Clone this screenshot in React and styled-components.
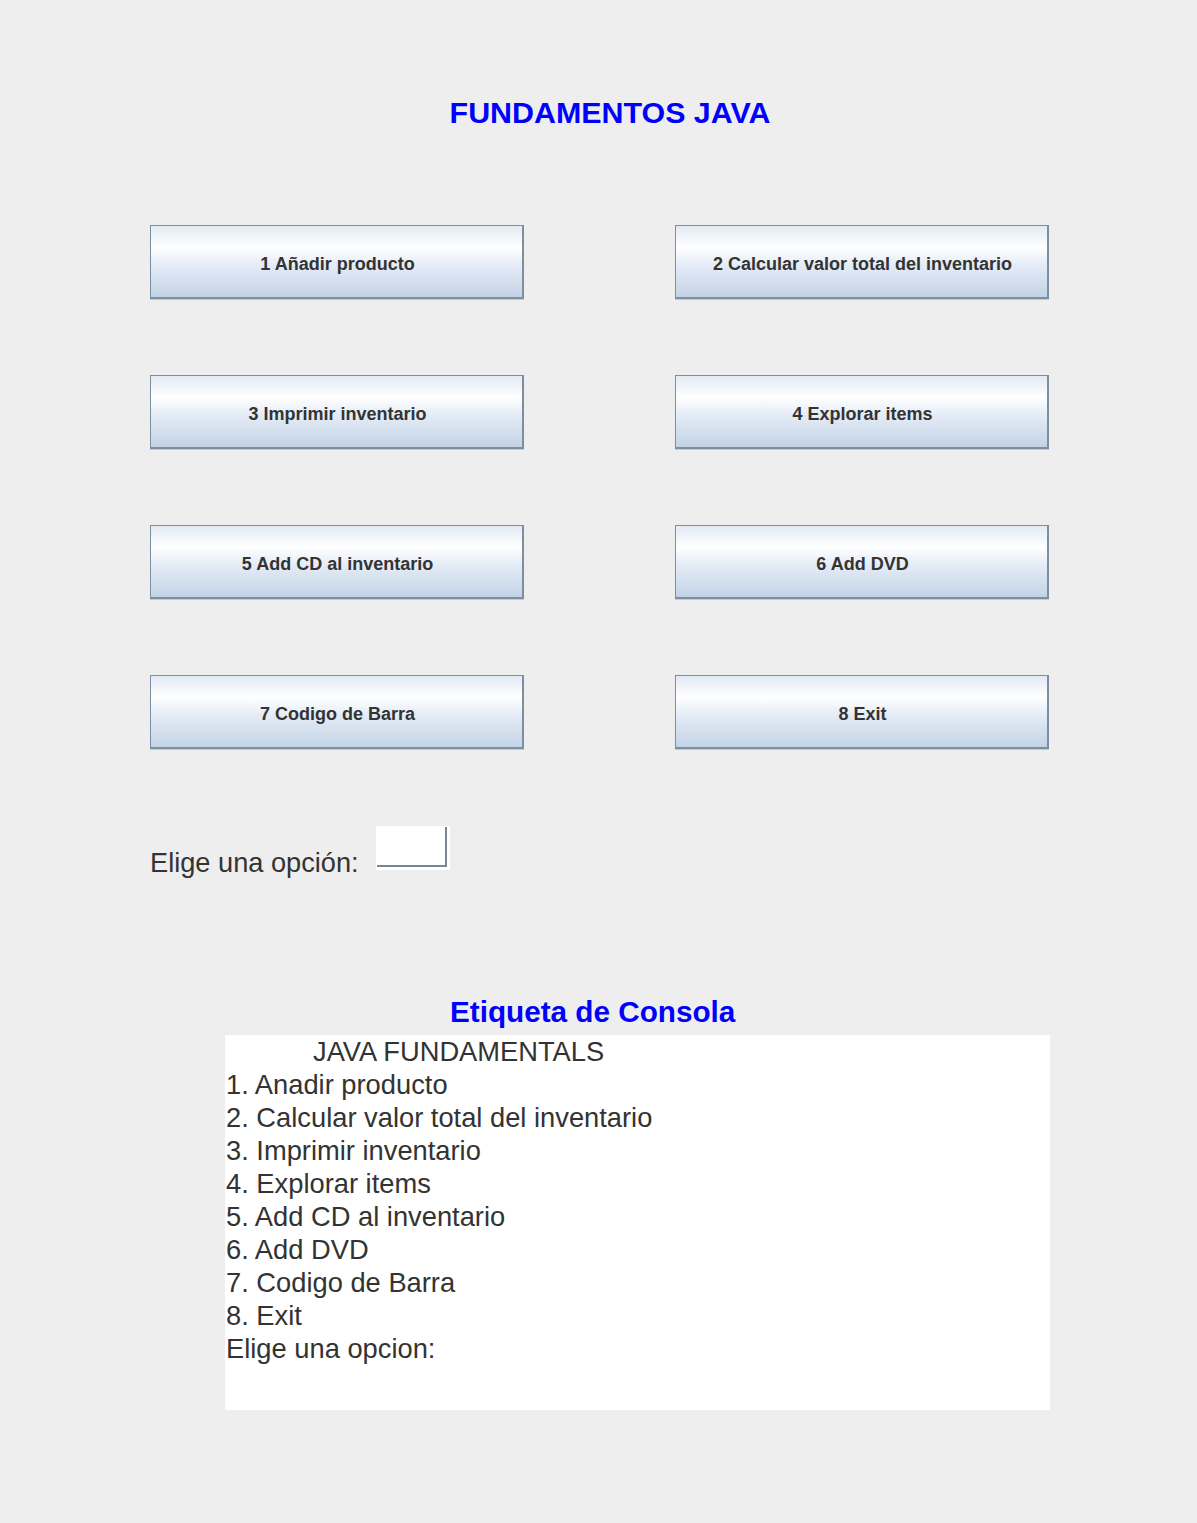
import React from 'react'
import styled, { createGlobalStyle } from 'styled-components'

const GlobalStyle = createGlobalStyle`
  html, body {
    margin: 0;
    padding: 0;
    background: #eeeeee;
  }
  body {
    font-family: "Liberation Sans", Arial, sans-serif;
    color: #333333;
  }
`

const Page = styled.div`
  width: 1197px;
  min-height: 1523px;
  display: flex;
  flex-direction: column;
  align-items: flex-start;
  padding-left: 150px;
  box-sizing: border-box;
`

const Title = styled.h1`
  margin: 94px 0 0 0;
  width: 920px;
  text-align: center;
  font-size: 30.4px;
  font-weight: bold;
  line-height: 36px;
  color: #0000ff;
`

const ButtonGrid = styled.div`
  margin-top: 95px;
  display: grid;
  grid-template-columns: 374px 374px;
  column-gap: 151px;
  row-gap: 76px;
`

const MenuButton = styled.button`
  height: 74px;
  box-sizing: border-box;
  border: 1px solid #7d8ea3;
  border-right-width: 2px;
  border-bottom-width: 2px;
  box-shadow: 0 1px 0 #b9cde3;
  background: linear-gradient(
    to bottom,
    #e2eaf4 0%,
    #ffffff 30%,
    #e4ecf6 55%,
    #c3d3e6 100%
  );
  font-family: "Liberation Sans", Arial, sans-serif;
  font-size: 18px;
  font-weight: bold;
  color: #333333;
  padding: 5px 0 0 2px;
  cursor: pointer;
`

const OptionRow = styled.div`
  margin-top: 77px;
  display: flex;
  align-items: flex-start;
  gap: 17px;
`

const OptionLabel = styled.span`
  margin-top: 21px;
  font-size: 27.2px;
  line-height: 32px;
  color: #333333;
`

const OptionInput = styled.div`
  width: 74px;
  height: 44px;
  box-sizing: border-box;
  background: #ffffff;
  position: relative;

  &::after {
    content: '';
    position: absolute;
    left: 1px;
    top: 1px;
    right: 3px;
    bottom: 3px;
    border-right: 2px solid #7a8694;
    border-bottom: 2px solid #7a8694;
  }
`

const ConsoleTitle = styled.h2`
  margin: 115px 0 0 0;
  width: 885px;
  font-size: 29.7px;
  font-weight: bold;
  line-height: 36px;
  color: #0000ff;
  padding-left: 300px;
  box-sizing: border-box;
`

const Console = styled.pre`
  margin: 5px 0 0 75px;
  width: 825px;
  height: 375px;
  box-sizing: border-box;
  background: #ffffff;
  font-family: "Liberation Sans", Arial, sans-serif;
  font-size: 27.3px;
  line-height: 33px;
  color: #333333;
  padding: 0 0 0 1px;
  white-space: pre;
  overflow: hidden;
`

const Heading = styled.span`
  display: block;
  padding-left: 87px;
`

const buttons = [
  '1 Añadir producto',
  '2 Calcular valor total del inventario',
  '3 Imprimir inventario',
  '4 Explorar items',
  '5 Add CD al inventario',
  '6 Add DVD',
  '7 Codigo de Barra',
  '8 Exit',
]

const lines = [
  '1. Anadir producto',
  '2. Calcular valor total del inventario',
  '3. Imprimir inventario',
  '4. Explorar items',
  '5. Add CD al inventario',
  '6. Add DVD',
  '7. Codigo de Barra',
  '8. Exit',
  'Elige una opcion:',
]

export default function App() {
  return (
    <>
      <GlobalStyle />
      <Page>
        <Title>FUNDAMENTOS JAVA</Title>
        <ButtonGrid>
          {buttons.map((label) => (
            <MenuButton key={label}>{label}</MenuButton>
          ))}
        </ButtonGrid>
        <OptionRow>
          <OptionLabel>Elige una opción:</OptionLabel>
          <OptionInput />
        </OptionRow>
        <ConsoleTitle>Etiqueta de Consola</ConsoleTitle>
        <Console>
          <Heading>JAVA FUNDAMENTALS</Heading>
          {lines.join('\n')}
        </Console>
      </Page>
    </>
  )
}
